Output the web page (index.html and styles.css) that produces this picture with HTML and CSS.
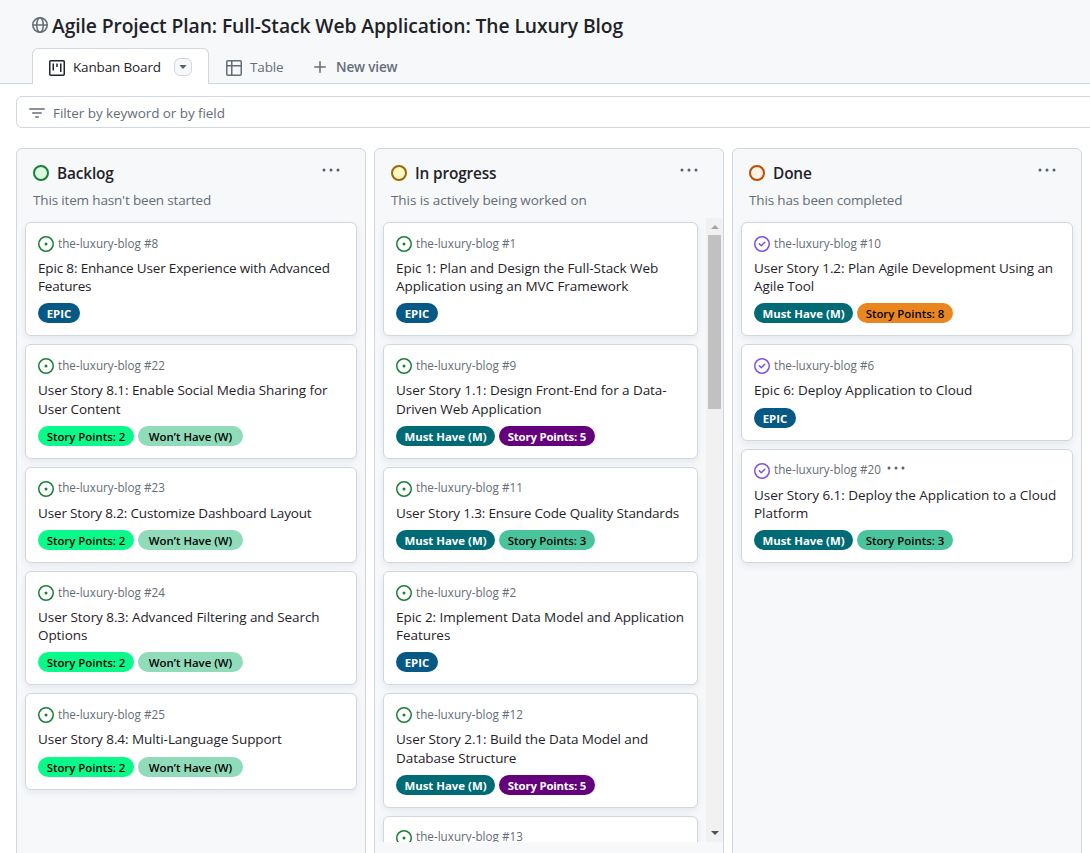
FILE: index.html
```html
<!DOCTYPE html>
<html lang="en">
<head>
<meta charset="utf-8">
<title>Agile Project Plan</title>
<link rel="stylesheet" href="styles.css">
</head>
<body>
<svg class="defs" width="0" height="0">
  <symbol id="open" viewBox="0 0 16 16"><path d="M8 9.5a1.5 1.5 0 1 0 0-3 1.5 1.5 0 0 0 0 3Z"/><path d="M8 0a8 8 0 1 1 0 16A8 8 0 0 1 8 0ZM1.500 8a6.500 6.500 0 1 0 13 0 6.500 6.500 0 0 0-13 0Z"/></symbol>
  <symbol id="closed" viewBox="0 0 16 16"><path d="M11.280 6.780a.750.750 0 0 0-1.060-1.060L7.250 8.690 5.780 7.220a.750.750 0 0 0-1.060 1.060l2 2a.750.750 0 0 0 1.060 0l3.500-3.500Z"/><path d="M16 8A8 8 0 1 1 0 8a8 8 0 0 1 16 0Zm-1.500 0a6.500 6.500 0 1 0-13 0 6.500 6.500 0 0 0 13 0Z"/></symbol>
  <symbol id="dots" viewBox="0 0 18 4"><circle cx="2" cy="2" r="1.500"/><circle cx="9" cy="2" r="1.500"/><circle cx="16" cy="2" r="1.500"/></symbol>
</svg>
<header class="top">
  <h1 class="title">
    <svg class="globe" width="16" height="16" viewBox="0 0 16 16" fill="none" stroke="currentColor" stroke-width="1.500"><circle cx="8" cy="8" r="7.250"/><ellipse cx="8" cy="8" rx="3.300" ry="7.250"/><path d="M.7 8h14.600"/></svg>
    <span>Agile Project Plan: Full-Stack Web Application: The Luxury Blog</span>
  </h1>
  <nav class="tabs">
    <div class="tab active">
      <svg width="16" height="16" viewBox="0 0 16 16" fill="none" stroke="currentColor" stroke-width="1.500"><rect x=".75" y=".75" width="14.500" height="14.500" rx="1"/><path d="M4.250 3.500v7M8 3.500v3.500M11.750 3.500v8.500"/></svg>
      <span class="tab-name">Kanban Board</span>
      <span class="caret"><svg width="8" height="4" viewBox="0 0 8 4"><path d="M.4 0h7.200L4 4Z" fill="currentColor"/></svg></span>
    </div>
    <div class="tab table">
      <svg width="16" height="16" viewBox="0 0 16 16" fill="none" stroke="currentColor" stroke-width="1.500"><rect x=".75" y=".75" width="14.500" height="14.500" rx="1"/><path d="M.75 5.750h14.500M5.750.75v14.500"/></svg>
      <span>Table</span>
    </div>
    <div class="tab new">
      <svg width="12" height="12" viewBox="0 0 12 12" fill="none" stroke="currentColor" stroke-width="1.500" stroke-linecap="round"><path d="M6 .75v10.500M.75 6h10.500"/></svg>
      <span>New view</span>
    </div>
  </nav>
</header>
<div class="filter">
  <svg width="16" height="10" viewBox="0 0 16 10" fill="none" stroke="currentColor" stroke-width="1.500" stroke-linecap="round"><path d="M.75 1h14.500M3.750 5h8.500M6.750 9h2.500"/></svg>
  <span>Filter by keyword or by field</span>
</div>
<main class="board">
  <section class="column">
    <div class="head"><i class="status green"></i><h2>Backlog</h2><svg class="menu"><use href="#dots"/></svg></div>
    <p class="desc tight">This item hasn't been started</p>
    <div class="cards">
      <article class="card"><div class="meta"><svg class="open"><use href="#open"/></svg><span>the-luxury-blog #8</span></div><h3 class="tight">Epic 8: Enhance User Experience with Advanced<br>Features</h3><div class="labels"><b class="epic">EPIC</b></div></article>
      <article class="card"><div class="meta"><svg class="open"><use href="#open"/></svg><span>the-luxury-blog #22</span></div><h3>User Story 8.1: Enable Social Media Sharing for<br>User Content</h3><div class="labels"><b class="sp two">Story Points: 2</b><b class="wont">Won’t Have (W)</b></div></article>
      <article class="card"><div class="meta"><svg class="open"><use href="#open"/></svg><span>the-luxury-blog #23</span></div><h3 class="tight">User Story 8.2: Customize Dashboard Layout</h3><div class="labels"><b class="sp two">Story Points: 2</b><b class="wont">Won’t Have (W)</b></div></article>
      <article class="card"><div class="meta"><svg class="open"><use href="#open"/></svg><span>the-luxury-blog #24</span></div><h3>User Story 8.3: Advanced Filtering and Search<br>Options</h3><div class="labels"><b class="sp two">Story Points: 2</b><b class="wont">Won’t Have (W)</b></div></article>
      <article class="card"><div class="meta"><svg class="open"><use href="#open"/></svg><span>the-luxury-blog #25</span></div><h3>User Story 8.4: Multi-Language Support</h3><div class="labels"><b class="sp two">Story Points: 2</b><b class="wont">Won’t Have (W)</b></div></article>
    </div>
  </section>
  <section class="column">
    <div class="head"><i class="status yellow"></i><h2>In progress</h2><svg class="menu"><use href="#dots"/></svg></div>
    <p class="desc">This is actively being worked on</p>
    <div class="scroller">
      <div class="cards">
        <article class="card"><div class="meta"><svg class="open"><use href="#open"/></svg><span>the-luxury-blog #1</span></div><h3 class="wide">Epic 1: Plan and Design the Full-Stack Web<br>Application using an MVC Framework</h3><div class="labels"><b class="epic">EPIC</b></div></article>
        <article class="card"><div class="meta"><svg class="open"><use href="#open"/></svg><span>the-luxury-blog #9</span></div><h3>User Story 1.1: Design Front-End for a Data-<br>Driven Web Application</h3><div class="labels"><b class="must">Must Have (M)</b><b class="sp five">Story Points: 5</b></div></article>
        <article class="card"><div class="meta"><svg class="open"><use href="#open"/></svg><span>the-luxury-blog #11</span></div><h3 class="tight">User Story 1.3: Ensure Code Quality Standards</h3><div class="labels"><b class="must">Must Have (M)</b><b class="sp three">Story Points: 3</b></div></article>
        <article class="card"><div class="meta"><svg class="open"><use href="#open"/></svg><span>the-luxury-blog #2</span></div><h3 class="wide">Epic 2: Implement Data Model and Application<br>Features</h3><div class="labels"><b class="epic">EPIC</b></div></article>
        <article class="card"><div class="meta"><svg class="open"><use href="#open"/></svg><span>the-luxury-blog #12</span></div><h3>User Story 2.1: Build the Data Model and<br>Database Structure</h3><div class="labels"><b class="must">Must Have (M)</b><b class="sp five">Story Points: 5</b></div></article>
        <article class="card last"><div class="meta"><svg class="open"><use href="#open"/></svg><span>the-luxury-blog #13</span></div></article>
      </div>
      <div class="bar">
        <svg class="up" width="8" height="4" viewBox="0 0 8 4"><path d="M0 4h8L4 0Z"/></svg>
        <div class="thumb"></div>
        <svg class="down" width="8" height="4" viewBox="0 0 8 4"><path d="M0 0h8L4 4Z"/></svg>
      </div>
    </div>
  </section>
  <section class="column">
    <div class="head"><i class="status orange"></i><h2>Done</h2><svg class="menu"><use href="#dots"/></svg></div>
    <p class="desc tight">This has been completed</p>
    <div class="cards">
      <article class="card"><div class="meta"><svg class="closed"><use href="#closed"/></svg><span>the-luxury-blog #10</span></div><h3>User Story 1.2: Plan Agile Development Using an<br>Agile Tool</h3><div class="labels"><b class="must">Must Have (M)</b><b class="sp eight">Story Points: 8</b></div></article>
      <article class="card"><div class="meta"><svg class="closed"><use href="#closed"/></svg><span>the-luxury-blog #6</span></div><h3 class="loose">Epic 6: Deploy Application to Cloud</h3><div class="labels"><b class="epic">EPIC</b></div></article>
      <article class="card"><div class="meta"><svg class="closed"><use href="#closed"/></svg><span>the-luxury-blog #20</span><svg class="more"><use href="#dots"/></svg></div><h3 class="wide">User Story 6.1: Deploy the Application to a Cloud<br>Platform</h3><div class="labels"><b class="must">Must Have (M)</b><b class="sp three">Story Points: 3</b></div></article>
    </div>
  </section>
</main>
</body>
</html>
```
FILE: styles.css
```css
* { box-sizing: border-box; }
body {
  margin: 0;
  height: 853px;
  overflow: hidden;
  display: flex;
  flex-direction: column;
  background: #fff;
  color: #1f2328;
  font: 13.5px/20px "Open Sans", "Noto Sans", sans-serif;
  letter-spacing: -.07px;
  white-space: nowrap;
}
h1, h2, h3, p { margin: 0; font-weight: 400; }
svg { flex: none; display: block; }
.defs { position: absolute; }

.top {
  flex: none;
  height: 84px;
  background: #f6f8fa;
  border-bottom: 1px solid #d0d7de;
}
.title {
  display: flex;
  gap: 4px;
  height: 48px;
  padding: 11px 0 0 32px;
  font-size: 19.3px;
  font-weight: 600;
  letter-spacing: -.1px;
  line-height: 30px;
}
.globe { margin-top: 6px; color: #656d76; }
.tabs { display: flex; height: 36px; color: #656d76; letter-spacing: -.15px; }
.tab { display: flex; align-items: center; height: 38px; gap: 8px; }
.tab.active {
  width: 177px;
  height: 36px;
  margin-left: 32px;
  padding: 0 16px 0 16px;
  background: #fff;
  color: #1f2328;
  border: 1px solid #d0d7de;
  border-bottom: 0;
  border-radius: 6px 6px 0 0;
}
.tab.active > svg { margin-top: 3px; }
.tab.table > svg { margin-top: 1px; }
.caret {
  display: flex;
  align-items: center;
  justify-content: center;
  width: 18px;
  height: 18px;
  margin-left: auto;
  color: #57606a;
  background: #f6f8fa;
  border: 1px solid #d0d7de;
  border-radius: 6px;
}
.tab.table { width: 88px; margin-left: 17px; }
.tab.new { gap: 10px; font-weight: 600; }

.filter {
  flex: none;
  display: flex;
  align-items: center;
  gap: 8px;
  height: 32px;
  margin: 12px -10px 0 16px;
  padding-left: 12px;
  border: 1px solid #d0d7de;
  border-radius: 6px;
  color: #656d76;
}
.filter svg { margin-top: 2px; }
.filter span { margin-top: 2px; }

.board {
  flex: 1;
  display: flex;
  gap: 8px;
  margin-top: 20px;
  padding-left: 16px;
}
.column {
  flex: none;
  width: 350px;
  height: 740px;
  background: #f6f8fa;
  border: 1px solid #d0d7de;
  border-radius: 6px;
}
.head { display: flex; align-items: center; height: 41px; padding: 8px 24px 0 16px; }
.head h2 { margin-left: 8px; font-size: 15.4px; font-weight: 600; letter-spacing: -.15px; line-height: 24px; }
.status { width: 16px; height: 16px; margin-top: -1px; border: 2px solid; border-radius: 50%; }
.status.green { border-color: #1a7f37; background: #dafbe1; }
.status.yellow { border-color: #9a6700; background: #fff8c5; }
.status.orange { border-color: #bc4c00; background: #fff1e5; }
.menu { width: 18px; height: 4px; margin: -7px 1px 0 auto; fill: #57606a; }
.desc { height: 28px; padding-left: 16px; color: #656d76; }

.cards { display: flex; flex-direction: column; gap: 8px; padding: 4px 8px 0; }
.card {
  flex: none;
  padding: 12px;
  background: #fff;
  border: 1px solid #d0d7de;
  border-radius: 6px;
  box-shadow: 0 3px 6px rgba(140, 149, 159, .15);
}
.card.last { height: 114px; }
.meta { display: flex; align-items: center; height: 16px; gap: 4px; color: #656d76; font-size: 11.7px; letter-spacing: 0; }
.meta > svg { width: 16px; height: 16px; margin-top: 2px; }
.meta > span { margin-top: -1px; }
.meta > .more { width: 18px; height: 4px; margin: -3px 0 0 2px; fill: #57606a; }
.open { fill: #1a7f37; }
.closed { fill: #8250df; }
.card h3 { margin-top: 8px; font-size: 13.5px; line-height: 18.2px; }
.wide { letter-spacing: -.05px; }
.loose { letter-spacing: 0; }
.tight { letter-spacing: -.16px; }
.labels { display: flex; gap: 4px; margin-top: 8px; letter-spacing: 0; }
.labels b {
  height: 20px;
  border-radius: 10px;
  color: #fff;
  font-size: 11.4px;
  font-weight: 600;
  line-height: 21px;
  text-align: center;
}
.labels .epic { width: 42px; background: #075985; font-weight: 700; }
.labels .must { width: 99px; background: #006b75; font-weight: 700; }
.labels .wont { width: 105px; color: #000; background: #90dbb9; }
.labels .sp { width: 96px; color: #000; }
.labels .two { background: #09fa8b; }
.labels .three { background: #4ac49d; }
.labels .five { color: #fff; background: #64007c; font-weight: 700; letter-spacing: -.2px; }
.labels .eight { background: #e98620; }

.scroller { display: flex; height: 624px; overflow: hidden; }
.scroller .cards { width: 331px; flex: none; }
.bar {
  display: flex;
  flex-direction: column;
  align-items: center;
  width: 17px;
  background: #f1f1f1;
}
.up { margin: 7px 0 6px; fill: #a3a3a3; }
.thumb { width: 13px; height: 174px; background: #c1c1c1; }
.down { margin: auto 0 7px; fill: #505050; }
```
